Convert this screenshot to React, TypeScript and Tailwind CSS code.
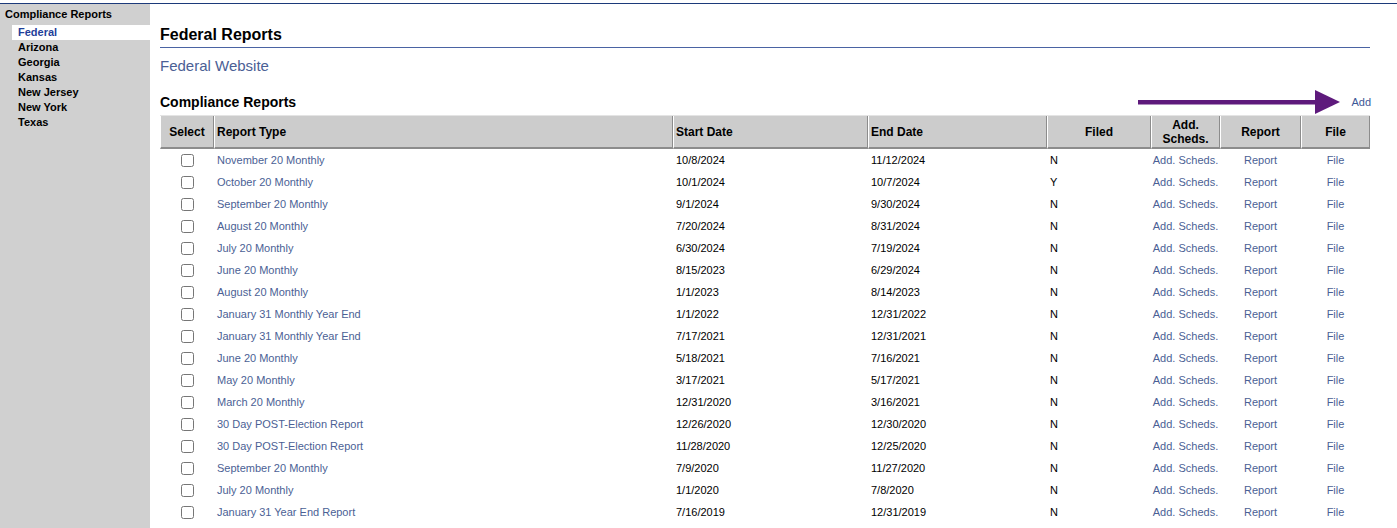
import React from "react";

type Row = {
  type: string;
  start: string;
  end: string;
  filed: string;
};

const rows: Row[] = [
  { type: "November 20 Monthly", start: "10/8/2024", end: "11/12/2024", filed: "N" },
  { type: "October 20 Monthly", start: "10/1/2024", end: "10/7/2024", filed: "Y" },
  { type: "September 20 Monthly", start: "9/1/2024", end: "9/30/2024", filed: "N" },
  { type: "August 20 Monthly", start: "7/20/2024", end: "8/31/2024", filed: "N" },
  { type: "July 20 Monthly", start: "6/30/2024", end: "7/19/2024", filed: "N" },
  { type: "June 20 Monthly", start: "8/15/2023", end: "6/29/2024", filed: "N" },
  { type: "August 20 Monthly", start: "1/1/2023", end: "8/14/2023", filed: "N" },
  { type: "January 31 Monthly Year End", start: "1/1/2022", end: "12/31/2022", filed: "N" },
  { type: "January 31 Monthly Year End", start: "7/17/2021", end: "12/31/2021", filed: "N" },
  { type: "June 20 Monthly", start: "5/18/2021", end: "7/16/2021", filed: "N" },
  { type: "May 20 Monthly", start: "3/17/2021", end: "5/17/2021", filed: "N" },
  { type: "March 20 Monthly", start: "12/31/2020", end: "3/16/2021", filed: "N" },
  { type: "30 Day POST-Election Report", start: "12/26/2020", end: "12/30/2020", filed: "N" },
  { type: "30 Day POST-Election Report", start: "11/28/2020", end: "12/25/2020", filed: "N" },
  { type: "September 20 Monthly", start: "7/9/2020", end: "11/27/2020", filed: "N" },
  { type: "July 20 Monthly", start: "1/1/2020", end: "7/8/2020", filed: "N" },
  { type: "January 31 Year End Report", start: "7/16/2019", end: "12/31/2019", filed: "N" },
  { type: "July 20 Monthly", start: "6/30/2019", end: "7/15/2019", filed: "N" },
];

const states = ["Federal", "Arizona", "Georgia", "Kansas", "New Jersey", "New York", "Texas"];

const th =
  "bg-[#cccccc] border-l border-l-white border-r border-r-[#8c8c8c] border-b-2 border-b-[#8c8c8c] text-[12px] font-bold leading-[14px] h-[33px] align-middle";

export default function App() {
  return (
    <div className="min-h-screen bg-white font-['Liberation_Sans',Arial,sans-serif] text-black">
      <div className="h-[3px]" />
      <div className="h-px bg-[#1c3a7a]" />
      <div className="flex">
        {/* barra lateral */}
        <aside className="w-[150px] shrink-0 bg-[#d0d0d0] pt-[3px] min-h-[600px]">
          <div className="pl-[5px] text-[11px] font-bold leading-[15px]">Compliance Reports</div>
          <ul className="mt-[3px]">
            {states.map((s) => (
              <li
                key={s}
                className={
                  s === "Federal"
                    ? "ml-[12px] pl-[6px] bg-white text-[11px] font-bold leading-[15px] text-[#1f3f99]"
                    : "ml-[12px] pl-[6px] text-[11px] font-bold leading-[15px]"
                }
              >
                {s}
              </li>
            ))}
          </ul>
        </aside>

        <main className="flex-1 pl-[10px] pr-[27px]">
          <h2 className="mt-[21px] pb-[2px] border-b border-[#4a63a3] text-[16px] font-bold leading-[20px]">
            Federal Reports
          </h2>
          <a className="block mt-[9px] text-[15px] leading-[18px] text-[#4b5f95]">Federal Website</a>

          <div className="relative mt-[18px] flex items-center justify-between">
            <h3 className="text-[14px] font-bold leading-[18px]">Compliance Reports</h3>
            <a className="text-[11px] leading-[18px] text-[#3d5796] mr-[-1px]">Add</a>
            <svg
              className="absolute left-[978px] top-[-3px]"
              width="202"
              height="25"
              viewBox="0 0 202 25"
            >
              <rect x="0" y="10" width="180" height="4.5" fill="#5e1a7c" />
              <polygon points="177,0 202,12 177,24" fill="#5e1a7c" />
            </svg>
          </div>

          <table className="mt-[4px] w-[1210px] table-fixed border-separate border-spacing-0 border-t border-[#e4e4e4]">
            <colgroup>
              <col className="w-[54px]" />
              <col className="w-[459px]" />
              <col className="w-[195px]" />
              <col className="w-[179px]" />
              <col className="w-[104px]" />
              <col className="w-[69px]" />
              <col className="w-[81px]" />
              <col className="w-[69px]" />
            </colgroup>
            <thead>
              <tr>
                <th className={th + " text-center"}>Select</th>
                <th className={th + " text-left pl-[2px]"}>Report Type</th>
                <th className={th + " text-left pl-[2px]"}>Start Date</th>
                <th className={th + " text-left pl-[2px]"}>End Date</th>
                <th className={th + " text-center"}>Filed</th>
                <th className={th + " text-center"}>
                  Add.
                  <br />
                  Scheds.
                </th>
                <th className={th + " text-center"}>Report</th>
                <th className={th + " text-center"}>File</th>
              </tr>
            </thead>
            <tbody className="text-[11px]">
              {rows.map((r, i) => (
                <tr key={i} className="h-[22px]">
                  <td className="text-center align-middle">
                    <input type="checkbox" className="w-[13px] h-[13px] align-middle mt-[-1px]" />
                  </td>
                  <td className="pl-[3px] text-[#4b5f95]">{r.type}</td>
                  <td className="pl-[3px]">{r.start}</td>
                  <td className="pl-[3px]">{r.end}</td>
                  <td className="pl-[3px]">{r.filed}</td>
                  <td className="text-center text-[#4b5f95]">Add. Scheds.</td>
                  <td className="text-center text-[#4b5f95]">Report</td>
                  <td className="text-center text-[#4b5f95]">File</td>
                </tr>
              ))}
            </tbody>
          </table>
        </main>
      </div>
    </div>
  );
}
